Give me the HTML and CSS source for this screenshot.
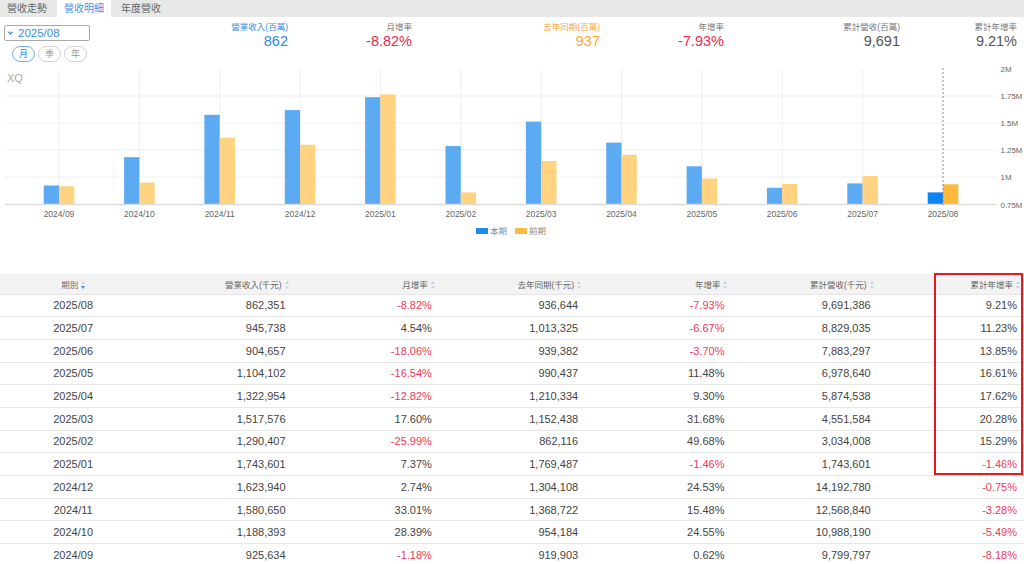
FILE: index.html
```html
<!DOCTYPE html>
<html lang="zh-Hant">
<head>
<meta charset="utf-8">
<title>營收明細</title>
<link rel="stylesheet" href="styles.css">
</head>
<body>
<div class="page">
  <div class="tabs">
    <div class="tab">營收走勢</div>
    <div class="tab active">營收明細</div>
    <div class="tab">年度營收</div>
  </div>

  <div class="top">
    <div class="picker">
      <div class="select">
        <svg class="chev" width="5" height="4" viewBox="0 0 5 4"><path d="M0.5 0.8L2.5 3L4.5 0.8" fill="none" stroke="#3a8ee6" stroke-width="1.3"/></svg>
        <span>2025/08</span>
      </div>
      <div class="periods">
        <span class="pill on">月</span>
        <span class="pill">季</span>
        <span class="pill">年</span>
      </div>
    </div>
    <div class="stat"><div class="lbl blue">營業收入(百萬)</div><div class="val blue">862</div></div>
    <div class="stat"><div class="lbl">月增率</div><div class="val red">-8.82%</div></div>
    <div class="stat"><div class="lbl orange">去年同期(百萬)</div><div class="val orange">937</div></div>
    <div class="stat"><div class="lbl">年增率</div><div class="val red">-7.93%</div></div>
    <div class="stat"><div class="lbl">累計營收(百萬)</div><div class="val gray">9,691</div></div>
    <div class="stat"><div class="lbl">累計年增率</div><div class="val gray">9.21%</div></div>
  </div>

  <svg class="chart" width="1024" height="177" viewBox="0 63 1024 177">
    <g class="grid">
      <line x1="5" y1="96" x2="997" y2="96"/>
      <line x1="5" y1="123" x2="997" y2="123"/>
      <line x1="5" y1="150" x2="997" y2="150"/>
      <line x1="5" y1="177" x2="997" y2="177"/>
      <line x1="59" y1="69" x2="59" y2="204"/>
      <line x1="139.4" y1="69" x2="139.4" y2="204"/>
      <line x1="219.7" y1="69" x2="219.7" y2="204"/>
      <line x1="300.1" y1="69" x2="300.1" y2="204"/>
      <line x1="380.4" y1="69" x2="380.4" y2="204"/>
      <line x1="460.8" y1="69" x2="460.8" y2="204"/>
      <line x1="541.2" y1="69" x2="541.2" y2="204"/>
      <line x1="621.5" y1="69" x2="621.5" y2="204"/>
      <line x1="701.9" y1="69" x2="701.9" y2="204"/>
      <line x1="782.2" y1="69" x2="782.2" y2="204"/>
      <line x1="862.6" y1="69" x2="862.6" y2="204"/>
    </g>
    <text class="xq" x="7" y="81.5">XQ</text>
    <g class="cur">
      <rect x="43.7" y="185.5" width="15.3" height="19"/>
      <rect x="124.1" y="157.2" width="15.3" height="47.3"/>
      <rect x="204.4" y="114.8" width="15.3" height="89.7"/>
      <rect x="284.8" y="110.1" width="15.3" height="94.4"/>
      <rect x="365.1" y="97.2" width="15.3" height="107.3"/>
      <rect x="445.5" y="146.1" width="15.3" height="58.4"/>
      <rect x="525.9" y="121.6" width="15.3" height="82.9"/>
      <rect x="606.2" y="142.6" width="15.3" height="61.9"/>
      <rect x="686.6" y="166.3" width="15.3" height="38.2"/>
      <rect x="766.9" y="187.8" width="15.3" height="16.7"/>
      <rect x="847.3" y="183.4" width="15.3" height="21.1"/>
    </g>
    <g class="prev">
      <rect x="59" y="186.2" width="15.3" height="18.3"/>
      <rect x="139.4" y="182.5" width="15.3" height="22"/>
      <rect x="219.7" y="137.7" width="15.3" height="66.8"/>
      <rect x="300.1" y="144.7" width="15.3" height="59.8"/>
      <rect x="380.4" y="94.4" width="15.3" height="110.1"/>
      <rect x="460.8" y="192.4" width="15.3" height="12.1"/>
      <rect x="541.2" y="161" width="15.3" height="43.5"/>
      <rect x="621.5" y="154.8" width="15.3" height="49.7"/>
      <rect x="701.9" y="178.5" width="15.3" height="26"/>
      <rect x="782.2" y="184" width="15.3" height="20.5"/>
      <rect x="862.6" y="176.1" width="15.3" height="28.4"/>
    </g>
    <rect class="cur-hi" x="927.7" y="192.4" width="15.3" height="12.1"/>
    <rect class="prev-hi" x="943" y="184.3" width="15.3" height="20.2"/>
    <line class="base" x1="5" y1="204.5" x2="997" y2="204.5"/>
    <line class="cross" x1="943" y1="68" x2="943" y2="205"/>
    <g class="ylab">
      <text x="1000.5" y="71.5">2M</text>
      <text x="1000.5" y="99">1.75M</text>
      <text x="1000.5" y="126">1.5M</text>
      <text x="1000.5" y="153">1.25M</text>
      <text x="1000.5" y="180">1M</text>
      <text x="1000.5" y="207.5">0.75M</text>
    </g>
    <g class="xlab">
      <text x="59" y="217">2024/09</text>
      <text x="139.4" y="217">2024/10</text>
      <text x="219.7" y="217">2024/11</text>
      <text x="300.1" y="217">2024/12</text>
      <text x="380.4" y="217">2025/01</text>
      <text x="460.8" y="217">2025/02</text>
      <text x="541.2" y="217">2025/03</text>
      <text x="621.5" y="217">2025/04</text>
      <text x="701.9" y="217">2025/05</text>
      <text x="782.2" y="217">2025/06</text>
      <text x="862.6" y="217">2025/07</text>
      <text x="943" y="217">2025/08</text>
    </g>
    <g class="legend">
      <rect x="476" y="228" width="12" height="6" fill="#1a8cf0"/>
      <text x="490" y="234">本期</text>
      <rect x="515" y="228" width="12" height="6" fill="#ffb840"/>
      <text x="529" y="234">前期</text>
    </g>
  </svg>

  <div class="table">
    <div class="row head">
      <div class="c center">期別<svg class="sort" width="4" height="8" viewBox="0 0 4 8"><path d="M2 0L4 3H0Z" fill="#c8d6e4"/><path d="M2 8L4 5H0Z" fill="#3a8ee6"/></svg></div>
      <div class="c">營業收入(千元)<svg class="sort" width="4" height="8" viewBox="0 0 4 8"><path d="M2 0L4 3H0Z" fill="#c8d6e4"/><path d="M2 8L4 5H0Z" fill="#c8d6e4"/></svg></div>
      <div class="c">月增率<svg class="sort" width="4" height="8" viewBox="0 0 4 8"><path d="M2 0L4 3H0Z" fill="#c8d6e4"/><path d="M2 8L4 5H0Z" fill="#c8d6e4"/></svg></div>
      <div class="c">去年同期(千元)<svg class="sort" width="4" height="8" viewBox="0 0 4 8"><path d="M2 0L4 3H0Z" fill="#c8d6e4"/><path d="M2 8L4 5H0Z" fill="#c8d6e4"/></svg></div>
      <div class="c">年增率<svg class="sort" width="4" height="8" viewBox="0 0 4 8"><path d="M2 0L4 3H0Z" fill="#c8d6e4"/><path d="M2 8L4 5H0Z" fill="#c8d6e4"/></svg></div>
      <div class="c">累計營收(千元)<svg class="sort" width="4" height="8" viewBox="0 0 4 8"><path d="M2 0L4 3H0Z" fill="#c8d6e4"/><path d="M2 8L4 5H0Z" fill="#c8d6e4"/></svg></div>
      <div class="c">累計年增率<svg class="sort" width="4" height="8" viewBox="0 0 4 8"><path d="M2 0L4 3H0Z" fill="#c8d6e4"/><path d="M2 8L4 5H0Z" fill="#c8d6e4"/></svg></div>
    </div>
    <div class="row"><div class="c center">2025/08</div><div class="c">862,351</div><div class="c neg">-8.82%</div><div class="c">936,644</div><div class="c neg">-7.93%</div><div class="c">9,691,386</div><div class="c">9.21%</div></div>
    <div class="row"><div class="c center">2025/07</div><div class="c">945,738</div><div class="c">4.54%</div><div class="c">1,013,325</div><div class="c neg">-6.67%</div><div class="c">8,829,035</div><div class="c">11.23%</div></div>
    <div class="row"><div class="c center">2025/06</div><div class="c">904,657</div><div class="c neg">-18.06%</div><div class="c">939,382</div><div class="c neg">-3.70%</div><div class="c">7,883,297</div><div class="c">13.85%</div></div>
    <div class="row"><div class="c center">2025/05</div><div class="c">1,104,102</div><div class="c neg">-16.54%</div><div class="c">990,437</div><div class="c">11.48%</div><div class="c">6,978,640</div><div class="c">16.61%</div></div>
    <div class="row"><div class="c center">2025/04</div><div class="c">1,322,954</div><div class="c neg">-12.82%</div><div class="c">1,210,334</div><div class="c">9.30%</div><div class="c">5,874,538</div><div class="c">17.62%</div></div>
    <div class="row"><div class="c center">2025/03</div><div class="c">1,517,576</div><div class="c">17.60%</div><div class="c">1,152,438</div><div class="c">31.68%</div><div class="c">4,551,584</div><div class="c">20.28%</div></div>
    <div class="row"><div class="c center">2025/02</div><div class="c">1,290,407</div><div class="c neg">-25.99%</div><div class="c">862,116</div><div class="c">49.68%</div><div class="c">3,034,008</div><div class="c">15.29%</div></div>
    <div class="row"><div class="c center">2025/01</div><div class="c">1,743,601</div><div class="c">7.37%</div><div class="c">1,769,487</div><div class="c neg">-1.46%</div><div class="c">1,743,601</div><div class="c neg">-1.46%</div></div>
    <div class="row"><div class="c center">2024/12</div><div class="c">1,623,940</div><div class="c">2.74%</div><div class="c">1,304,108</div><div class="c">24.53%</div><div class="c">14,192,780</div><div class="c neg">-0.75%</div></div>
    <div class="row"><div class="c center">2024/11</div><div class="c">1,580,650</div><div class="c">33.01%</div><div class="c">1,368,722</div><div class="c">15.48%</div><div class="c">12,568,840</div><div class="c neg">-3.28%</div></div>
    <div class="row"><div class="c center">2024/10</div><div class="c">1,188,393</div><div class="c">28.39%</div><div class="c">954,184</div><div class="c">24.55%</div><div class="c">10,988,190</div><div class="c neg">-5.49%</div></div>
    <div class="row"><div class="c center">2024/09</div><div class="c">925,634</div><div class="c neg">-1.18%</div><div class="c">919,903</div><div class="c">0.62%</div><div class="c">9,799,797</div><div class="c neg">-8.18%</div></div>
    <div class="highlight"></div>
  </div>
</div>
</body>
</html>
```

FILE: styles.css
```css
html, body {
  margin: 0;
  padding: 0;
  background: #fff;
}
body {
  font-family: "Liberation Sans", "Noto Sans CJK TC", sans-serif;
  color: #444;
  overflow: hidden;
}
.page {
  width: 1024px;
  height: 564px;
  overflow: hidden;
}

/* tabs */
.tabs {
  display: flex;
  height: 17px;
  background: #e8e8e8;
}
.tab {
  padding: 0 7px;
  margin-right: 3px;
  font-size: 10px;
  line-height: 17px;
  color: #666;
}
.tab.active {
  background: #fff;
  color: #4a90e2;
}

/* top summary */
.top {
  display: grid;
  grid-template-columns: 160px 128px 124px 188px 124px 176px 117px;
  height: 46px;
  box-sizing: border-box;
}
.picker {
  padding-top: 8px;
}
.select {
  display: flex;
  align-items: center;
  width: 86px;
  height: 16px;
  box-sizing: border-box;
  margin-left: 4px;
  border: 1px solid #aaa;
  border-radius: 2px;
  font-size: 11.5px;
  color: #3a8ee6;
}
.chev {
  margin: 0 5px 0 3px;
}
.periods {
  display: flex;
  gap: 3px;
  margin: 5px 0 0 12px;
}
.pill {
  width: 23px;
  height: 16px;
  box-sizing: border-box;
  border: 1px solid #d2d2d2;
  border-radius: 8px;
  font-size: 9px;
  line-height: 14px;
  text-align: center;
  color: #999;
}
.pill.on {
  border-color: #74acea;
  color: #3a8ee6;
}
.stat {
  text-align: right;
  padding-top: 4px;
}
.lbl {
  font-size: 8.5px;
  line-height: 12px;
  color: #777;
}
.val {
  font-size: 14.5px;
  line-height: 16px;
  color: #555;
}
.blue { color: #3a8ee6; }
.val.blue { color: #2d85e6; }
.orange { color: #ffa833; }
.red { color: #f0284b; }
.gray { color: #555; }

/* chart */
.chart {
  display: block;
  font-family: "Liberation Sans", "Noto Sans CJK TC", sans-serif;
}
.grid line {
  stroke: #efefef;
  stroke-width: 1;
}
.base {
  stroke: #dcdcdc;
  stroke-width: 1.5;
}
.cross {
  stroke: #8a8a9a;
  stroke-width: 1;
  stroke-dasharray: 2 2;
}
.cur rect {
  fill: #5caaf2;
}
.prev rect {
  fill: #ffd37f;
}
.cur-hi { fill: #0d84f0; }
.prev-hi { fill: #ffb83a; }
.xq {
  font-size: 11px;
  fill: #aaa;
}
.ylab text {
  font-size: 7.9px;
  fill: #666;
}
.xlab text {
  font-size: 8.5px;
  fill: #666;
  text-anchor: middle;
}
.legend text {
  font-size: 8.5px;
  fill: #888;
}

/* table */
.table {
  position: relative;
  margin-top: 34px;
}
.row {
  display: grid;
  grid-template-columns: repeat(7, 1fr);
  align-items: center;
  height: 22.7px;
  box-sizing: border-box;
  border-bottom: 1px solid #e6e6e6;
  font-size: 11px;
  color: #444;
}
.row.head {
  height: 20.5px;
  background: #f3f3f3;
  font-size: 8.5px;
  color: #666;
}
.c {
  text-align: right;
  padding-right: 7px;
  white-space: nowrap;
}
.head .c {
  padding-right: 4px;
}
.c.center {
  text-align: center;
  padding-right: 0;
}
.sort {
  margin-left: 3px;
  vertical-align: -1px;
}
.neg {
  color: #f0385a;
}
.highlight {
  position: absolute;
  left: 934px;
  top: -1px;
  width: 89px;
  height: 202px;
  box-sizing: border-box;
  border: 2px solid #e6191e;
  pointer-events: none;
}
```
